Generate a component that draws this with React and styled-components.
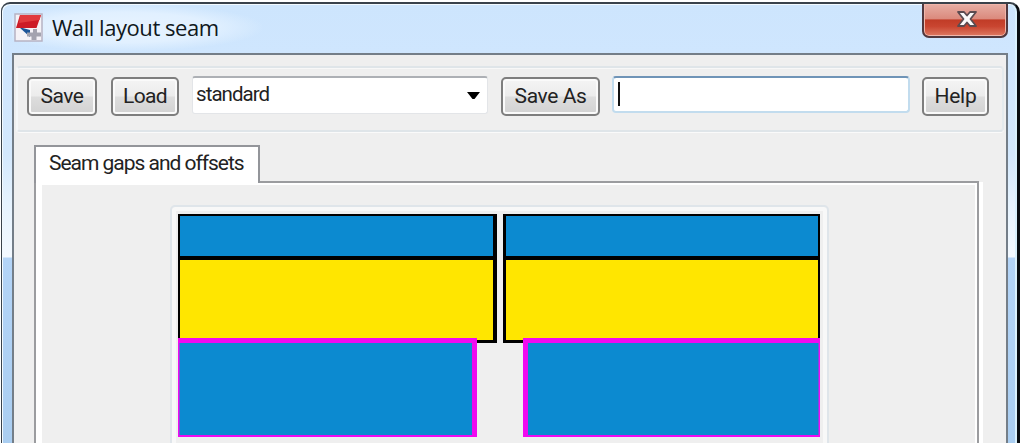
import React from 'react';
import styled, { createGlobalStyle } from 'styled-components';

const GlobalStyle = createGlobalStyle`
  * {
    box-sizing: border-box;
  }

  body {
    margin: 0;
    background: #fff;
    overflow: hidden;
    font-family: Roboto, 'Liberation Sans', sans-serif;
    color: #222;
  }
`;

const Desktop = styled.div`
  height: 443px;
  padding: 2px 3px 0 1px;
  overflow: hidden;
`;

const Window = styled.div`
  height: 460px;
  padding: 0 9px 0 10px;
  border: solid #39424b;
  border-width: 2px 3px 0 1px;
  border-right-color: #080c10;
  border-radius: 9px 10px 0 0;
  box-shadow: inset 1px 1px 0 #f2faff, inset -2px 0 0 #d9f1fd;
  background: linear-gradient(
    to bottom,
    #cde5fd 0,
    #cfe6fe 50px,
    #d3e8fd 150px,
    #e6f3fe 200px,
    #f3f9ff 253px,
    #b3d4f7 254px,
    #a9cdf0 100%
  );
`;

const TitleBar = styled.header`
  display: flex;
  justify-content: space-between;
  height: 49px;
`;

const Caption = styled.div`
  display: flex;
  align-items: center;
  gap: 9px;
  padding-left: 2px;
  width: 250px;
  height: 47px;
  background: radial-gradient(ellipse at 45% 50%, #e7f3ff 0, #e1f0ff 45%, rgba(207, 230, 254, 0) 72%);
`;

const Title = styled.h1`
  margin: 0 0 1px;
  font: 400 22px/30px 'Open Sans', 'Noto Sans', sans-serif;
  letter-spacing: -0.45px;
  color: #101820;
  white-space: nowrap;
`;

const CloseButton = styled.button`
  display: flex;
  justify-content: center;
  width: 86px;
  height: 34px;
  padding: 5px 0 0 4px;
  border: 2px solid #50383e;
  border-top: 0;
  border-radius: 0 0 7px 7px;
  box-shadow: inset 0 0 0 1px #f0b6ab;
  background: linear-gradient(#e6aea4 0, #db8a7d 46%, #c13c27 50%, #c94530 70%, #de7a62 100%);
`;

const Client = styled.main`
  height: 410px;
  padding: 11px 2px 0;
  border: 2px solid #747e88;
  border-bottom: 0;
  background: #efefef;
`;

const Toolbar = styled.div`
  display: flex;
  align-items: flex-start;
  height: 66px;
  padding: 8px 0 0 9px;
  border: 2px solid #dfe5e9;
  border-left-color: #f5f7f8;
  border-right-color: #e4eaed;
  border-radius: 4px;
  box-shadow: 0 1px 0 #fafafa, inset 0 1px 0 #f8f8f8;
`;

const Button = styled.button`
  width: ${({ $width }) => $width}px;
  height: 39px;
  margin: 1px ${({ $gap }) => $gap || 0}px 0 0;
  padding: 0 0 2px;
  border: 2px solid #7e7e7e;
  border-radius: 5px;
  box-shadow: inset 0 0 0 2px #fafafa;
  background: linear-gradient(#f4f4f4 0, #ececec 48%, #dddddd 52%, #d2d2d2 100%);
  font: 400 21px/30px Roboto, sans-serif;
  letter-spacing: ${({ $spacing }) => $spacing || 0}px;
  color: #222;
  white-space: nowrap;
`;

const Select = styled.div`
  display: flex;
  align-items: center;
  justify-content: space-between;
  width: 296px;
  height: 38px;
  margin-right: 13px;
  padding: 0 7px 0 3px;
  border: 1px solid #e3e5e8;
  border-top: 2px solid #adb0b5;
  border-radius: 3px;
  background: #fff;
`;

const SelectValue = styled.span`
  margin-bottom: 3px;
  font-size: 20.5px;
  line-height: 30px;
  letter-spacing: -0.95px;
`;

const TextField = styled.div`
  width: 298px;
  height: 37px;
  margin-right: 12px;
  padding: 4px 0 0 4px;
  border: 2px solid #c2dcee;
  border-top-color: #6f94b7;
  border-radius: 4px;
  background: #fff;
`;

const Caret = styled.div`
  width: 2px;
  height: 24px;
  background: #111;
`;

const Tabs = styled.section`
  padding: 13px 25px 0 18px;
`;

const Tab = styled.div`
  position: relative;
  width: 226px;
  height: 38px;
  padding: 1px 0 0 13px;
  border: 2px solid #93959a;
  border-bottom: 0;
  background: #fff;
  font-size: 21px;
  line-height: 30px;
  letter-spacing: -1.02px;
  white-space: nowrap;
`;

const Pane = styled.div`
  display: flex;
  justify-content: center;
  height: 280px;
  margin-top: -2px;
  padding: 22px 14px 0 0;
  border: 2px solid #9b9c9f;
  border-bottom: 0;
  box-shadow: inset 6px 0 0 #fff, inset -2px 2px 0 #fff, 4px 1px 0 #fff;
`;

const Preview = styled.div`
  width: 659px;
  height: 260px;
  padding: 7px 0 0 6px;
  border: 2px solid #dfe5ea;
  border-radius: 5px;
  box-shadow: inset 0 0 0 4px #f8f8f8;
`;

function AppIcon() {
  return (
    <svg width="29" height="29" viewBox="0 0 29 29">
      <rect x="1" y="1" width="27" height="27" fill="#f5f2f7" stroke="#b6b3c3" strokeWidth="1.5" />
      <path d="M5 14 L16 17 L16 24 Z" fill="#1e5598" />
      <path d="M6 2 H27 L22.5 15 H2 Z" fill="#cd1b27" />
      <path d="M6 2 H27 L25.5 7 L5 10 Z" fill="#e13a3e" />
      <path d="M19 16 H23 V19.5 H27 V23.5 H22.5 V27 H17.5 V23.5 H13 V19.5 H19 Z" fill="#a4a3af" />
    </svg>
  );
}

function CloseIcon() {
  return (
    <svg width="22" height="20" viewBox="0 0 22 20">
      <path
        d="M2 3 H8 L11 6.5 L14 3 H20 L14.5 10 L20 17 H14 L11 13.5 L8 17 H2 L7.5 10 Z"
        fill="#fafafa"
        stroke="#5b4b50"
        strokeWidth="1.8"
        strokeLinejoin="round"
      />
    </svg>
  );
}

function Arrow() {
  return (
    <svg width="13" height="8" viewBox="0 0 13 8">
      <path d="M0 0 H13 L7.5 7 H5.5 Z" fill="#000" />
    </svg>
  );
}

// Two wall panels side by side, with the lower layer set back from the seam
function SeamDrawing() {
  return (
    <svg width="642" height="223" viewBox="0 0 642 223" shapeRendering="crispEdges">
      <rect x="0" y="0" width="319" height="129" fill="#000" />
      <rect x="2" y="2" width="313" height="40" fill="#0c8ad0" />
      <rect x="2" y="46" width="313" height="80" fill="#ffe600" />
      <rect x="325" y="0" width="317" height="129" fill="#000" />
      <rect x="328" y="2" width="312" height="40" fill="#0c8ad0" />
      <rect x="328" y="46" width="312" height="80" fill="#ffe600" />

      <rect x="0" y="124" width="299" height="99" fill="#f00af0" />
      <rect x="1" y="129" width="293" height="92" fill="#0c8ad0" />
      <rect x="1" y="129" width="1" height="92" fill="#7d4be0" />
      <rect x="345" y="124" width="297" height="99" fill="#f00af0" />
      <rect x="350" y="129" width="291" height="92" fill="#0c8ad0" />
      <rect x="640" y="129" width="1" height="92" fill="#7d4be0" />
    </svg>
  );
}

export default function App() {
  return (
    <>
      <GlobalStyle />
      <Desktop>
        <Window>
          <TitleBar>
            <Caption>
              <AppIcon />
              <Title>Wall layout seam</Title>
            </Caption>
            <CloseButton aria-label="Close">
              <CloseIcon />
            </CloseButton>
          </TitleBar>
          <Client>
            <Toolbar>
              <Button $width={70} $gap={14} $spacing={-0.5}>Save</Button>
              <Button $width={68} $gap={13} $spacing={-0.6}>Load</Button>
              <Select>
                <SelectValue>standard</SelectValue>
                <Arrow />
              </Select>
              <Button $width={99} $gap={12} $spacing={-0.4}>Save As</Button>
              <TextField>
                <Caret />
              </TextField>
              <Button $width={67} $spacing={-0.3}>Help</Button>
            </Toolbar>
            <Tabs>
              <Tab>Seam gaps and offsets</Tab>
              <Pane>
                <Preview>
                  <SeamDrawing />
                </Preview>
              </Pane>
            </Tabs>
          </Client>
        </Window>
      </Desktop>
    </>
  );
}
